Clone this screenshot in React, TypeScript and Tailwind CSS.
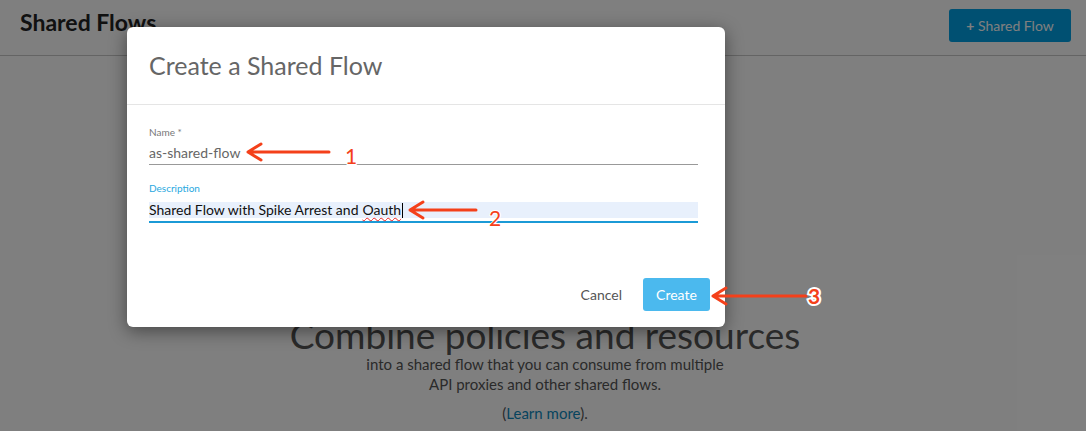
export default function App() {
  return (
    <div className="relative w-[1086px] h-[431px] overflow-hidden bg-white font-['Lato',sans-serif]">
      {/* page underneath */}
      <header className="h-[56px] border-b border-[#c8c8c8] flex items-start justify-between px-5 pt-[7px]">
        <h1 className="text-[23px] font-bold text-[#222] leading-[30px]">Shared Flows</h1>
        <button className="mt-[2px] h-[33px] w-[122px] rounded-[3px] bg-[#00a0e4] text-white text-[14px] mr-[-5px]">
          <span className="font-bold">+</span> Shared Flow
        </button>
      </header>
      <main className="flex flex-col items-center pt-[256px] pl-[4px] text-center">
        <h2 className="text-[37px] leading-[45px] text-[#555]">Combine policies and resources</h2>
        <p className="mt-[-3px] text-[15px] leading-[20px] text-[#555]">
          into a shared flow that you can consume from multiple
          <br />
          API proxies and other shared flows.
        </p>
        <p className="mt-[9px] text-[15px] leading-[20px] text-[#555]">
          (<a className="text-[#0e88bc]">Learn more</a>).
        </p>
      </main>

      {/* overlay */}
      <div className="absolute inset-0 bg-black/50" />

      {/* modal */}
      <div className="absolute left-[127px] top-[27px] w-[598px] h-[300px] bg-white rounded-[6px] shadow-[0_4px_18px_rgba(0,0,0,0.45)] flex flex-col">
        <div className="h-[78px] border-b border-[#e5e5e5] px-[22px] pt-[23px]">
          <h3 className="text-[25px] leading-[30px] text-[#666]">Create a Shared Flow</h3>
        </div>
        <div className="pl-[22px] pr-[27px] pt-[21px] flex flex-col">
          <label className="text-[10px] leading-[12px] text-[#777]">Name *</label>
          <div className="mt-[6px] h-[21px] border-b border-[#999] text-[14px] leading-[18px] text-[#666]">as-shared-flow</div>
          <label className="mt-[17px] text-[10px] leading-[12px] text-[#29a8e0]">Description</label>
          <div className="mt-[8px] h-[21px] border-b-2 border-[#1b9ad6] flex items-start">
            <div className="w-full h-[16px] bg-[#e8f0fc] text-[14px] leading-[16px] text-[#111] flex items-center">
              <span>Shared Flow with Spike Arrest and </span>
              <span className="ml-[4px] underline decoration-wavy decoration-[#e22] decoration-1 underline-offset-2">Oauth</span>
              <span className="inline-block w-px h-[15px] bg-black ml-px" />
            </div>
          </div>
        </div>
        <div className="mt-auto flex items-center justify-end gap-[21px] px-[15px] pb-[16px]">
          <button className="text-[14px] text-[#555]">Cancel</button>
          <button className="h-[33px] w-[67px] rounded-[3px] bg-[#4bb9ee] text-white text-[14px]">Create</button>
        </div>
      </div>

      {/* annotations */}
      <svg className="absolute inset-0 pointer-events-none" width="1086" height="431" viewBox="0 0 1086 431">
        <g stroke="#f4401a" strokeWidth="3" fill="none" strokeLinecap="round" strokeLinejoin="round">
          <path d="M248 152 H329 M261 144 L248 152 L261 160" />
          <path d="M410 210 H476 M423 202 L410 210 L423 218" />
          <path d="M713 296 H806 M726 288 L713 296 L726 304" />
        </g>
        <g fill="#f4401a" stroke="#fff" strokeWidth="2" paintOrder="stroke" fontFamily="Lato, sans-serif" fontSize="21">
          <text x="345" y="164">1</text>
          <text x="489" y="226">2</text>
          <text x="808" y="304" strokeWidth="4" fontWeight="bold">3</text>
        </g>
      </svg>
    </div>
  )
}
